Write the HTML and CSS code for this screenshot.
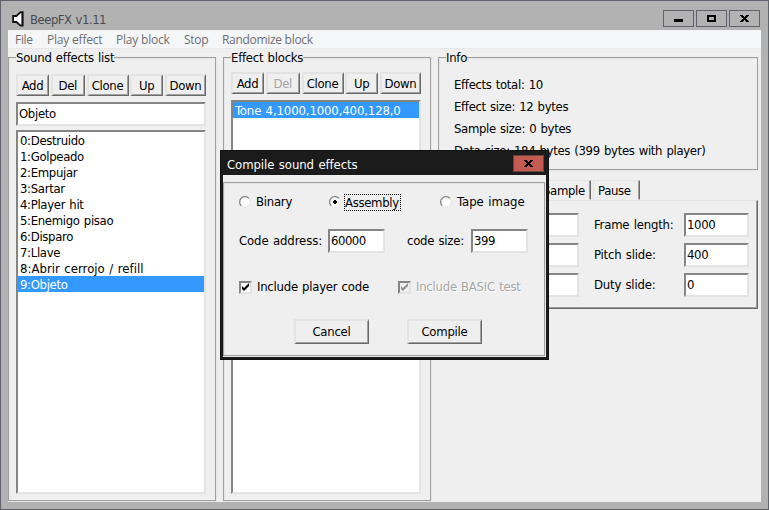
FILE: index.html
```html
<!DOCTYPE html>
<html lang="en">
<head>
<meta charset="utf-8">
<title>BeepFX v1.11</title>
<link rel="stylesheet" href="styles.css">
</head>
<body>
<div class="window">
  <header class="titlebar">
    <svg class="logo" width="13" height="16" viewBox="0 0 13 16"><path d="M1 5H4.5L9 2V14L4.5 11H1Z" fill="#fff"/><path d="M10.3 1.2H8.6L4.4 5H1.1V11H4.4L8.6 14.6H10.3Z" fill="#fff" stroke="#111" stroke-width="1.8"/><path d="M10.9 0.5V15.3" stroke="#111" stroke-width="1.2"/></svg>
    <h1>BeepFX v1.11</h1>
    <div class="controls">
      <button><svg width="9" height="9" viewBox="0 0 9 9"><path d="M0 5H9V8H0Z"/></svg></button>
      <button><svg width="9" height="9" viewBox="0 0 9 9"><path d="M0 1H9V8H0ZM2 3V6H7V3Z" fill-rule="evenodd"/></svg></button>
      <button><svg width="9" height="9" viewBox="0 0 9 9"><path d="M0 1H3V2H4V3H5V2H6V1H9V2H8V3H7V4H6V5H7V6H8V7H9V8H6V7H5V6H4V7H3V8H0V7H1V6H2V5H3V4H2V3H1V2H0Z"/></svg></button>
    </div>
  </header>
  <div class="client">
    <nav class="menu"><span class="m1">File</span><span class="m2">Play effect</span><span class="m3">Play block</span><span class="m4">Stop</span><span class="m5">Randomize block</span></nav>
    <main class="columns">
      <section class="group effects">
        <h2>Sound effects list</h2>
        <div class="buttons"><button class="btn">Add</button><button class="btn">Del</button><button class="btn">Clone</button><button class="btn">Up</button><button class="btn">Down</button></div>
        <div class="field name">Objeto</div>
        <ul class="list">
          <li>0:Destruido</li><li>1:Golpeado</li><li>2:Empujar</li><li>3:Sartar</li><li>4:Player hit</li><li>5:Enemigo pisao</li><li>6:Disparo</li><li>7:Llave</li><li class="loose">8:Abrir cerrojo / refill</li><li class="selected">9:Objeto</li>
        </ul>
      </section>
      <section class="group blocks">
        <h2>Effect blocks</h2>
        <div class="buttons"><button class="btn">Add</button><button class="btn disabled">Del</button><button class="btn">Clone</button><button class="btn">Up</button><button class="btn">Down</button></div>
        <ul class="list"><li class="selected">Tone 4,1000,1000,400,128,0</li></ul>
      </section>
      <div class="side">
        <section class="group info">
          <h2>Info</h2>
          <p>Effects total: 10</p><p>Effect size: 12 bytes</p><p>Sample size: 0 bytes</p><p>Data size: 184 bytes (399 bytes with player)</p>
        </section>
        <div class="tabs"><span class="tab sample">Sample</span><span class="tab pause">Pause</span></div>
        <section class="params">
          <div class="field"></div><label class="l1">Frame length:</label><div class="field">1000</div>
          <div class="field"></div><label class="l2">Pitch slide:</label><div class="field">400</div>
          <div class="field"></div><label class="l3">Duty slide:</label><div class="field">0</div>
        </section>
      </div>
    </main>
  </div>
  <div class="dialog">
    <header class="dialog-title"><h3>Compile sound effects</h3><button class="close"><svg width="9" height="9" viewBox="0 0 9 9"><path d="M0 1H3V2H4V3H5V2H6V1H9V2H8V3H7V4H6V5H7V6H8V7H9V8H6V7H5V6H4V7H3V8H0V7H1V6H2V5H3V4H2V3H1V2H0Z"/></svg></button></header>
    <div class="dialog-body"><div class="group form">
      <div class="row formats">
        <span class="option"><svg width="12" height="12" viewBox="0 0 12 12"><use href="#radio"/></svg><span class="binary">Binary</span></span>
        <span class="option"><svg width="12" height="12" viewBox="0 0 12 12"><use href="#radio"/><path d="M5 4H7V5H8V7H7V8H5V7H4V5H5Z"/></svg><span class="focus">Assembly</span></span>
        <span class="option"><svg width="12" height="12" viewBox="0 0 12 12"><use href="#radio"/></svg><span class="tape">Tape image</span></span>
      </div>
      <div class="row sizes"><label class="address">Code address:</label><div class="field">60000</div><label class="codesize">code size:</label><div class="field">399</div></div>
      <div class="row checks">
        <span class="option"><span class="check"><svg width="9" height="9" viewBox="0 0 9 9"><path d="M1 3V6L3 8L8 3V0L3 5Z"/></svg></span><span class="incplayer">Include player code</span></span>
        <span class="option off"><span class="check"><svg width="9" height="9" viewBox="0 0 9 9"><path d="M1 3V6L3 8L8 3V0L3 5Z"/></svg></span><span class="incbasic">Include BASIC test</span></span>
      </div>
      <div class="row actions"><button class="btn cancel">Cancel</button><button class="btn compile">Compile</button></div>
    </div></div>
  </div>
</div>
<svg width="0" height="0" class="defs"><defs><g id="radio"><circle cx="6" cy="6" r="5.3" fill="#fff" stroke="#e3e3e3"/><path d="M2.2 9.8A5.3 5.3 0 0 1 9.8 2.2" fill="none" stroke="#888" stroke-width="1.3"/></g></defs></svg>
</body>
</html>
```
FILE: styles.css
```css
* { box-sizing: border-box; }
body { margin: 0; font: 13px/16px "DejaVu Sans Condensed", "DejaVu Sans", sans-serif; font-stretch: condensed; letter-spacing: -0.33px; word-spacing: 0.8px; color: #000; }
h1, h2, h3, p, ul { margin: 0; padding: 0; font-size: inherit; font-weight: normal; }
button { font: inherit; letter-spacing: inherit; color: inherit; padding: 0; margin: 0; }
span, label, h1, h2, h3, li, p { white-space: nowrap; }
svg { display: block; flex: none; }
.defs { position: absolute; }
.window { position: relative; width: 769px; height: 510px; border: 1px solid #62626c; background: #b2b2b2; padding: 0 7px; overflow: hidden; }
.titlebar { height: 29px; display: flex; align-items: flex-start; padding: 9px 1px 0 4px; }
.logo { margin-top: 1px; }
h1 { color: #484b52; margin: 2px 0 0 5px; letter-spacing: -0.5px; }
.controls { margin-left: auto; display: flex; gap: 2px; }
.controls button { width: 31px; height: 17px; border: 1px solid #62626c; background: #b2b2b2; display: flex; align-items: center; justify-content: center; }
.client { height: 472px; width: 753px; background: #efefef; }
.menu { height: 19px; background: #f4f6f8; border-bottom: 1px solid #e8e8e9; display: flex; padding-left: 7px; color: #6e6e70; font: 12px/20px "Open Sans", sans-serif; letter-spacing: -0.3px; word-spacing: 0; }
.m1 { width: 32px; } .m2 { width: 69px; } .m3 { width: 68px; } .m4 { width: 38px; }
.m2, .m3 { letter-spacing: -0.2px; }
.columns { display: grid; grid-template-columns: 208px 208px 320px; gap: 7px; padding-top: 8px; height: 453px; }
.group { border: 1px solid #a0a0a0; box-shadow: inset 1px 1px #e6e6e6, 1px 1px #e6e6e6; display: flex; flex-direction: column; align-items: flex-start; }
.group h2 { height: 16px; margin: -8px 0 0 7px; background: #efefef; letter-spacing: -0.25px; }
.effects, .blocks { height: 444px; }
.buttons { display: grid; grid-template-columns: 33px 34px 42px 33px 41px; column-gap: 1.75px; height: 22px; width: 190px; margin: 8px 0 0 7px; }
.blocks .buttons { margin-top: 6px; }
.btn { background: #efefef; border: 2px solid; border-color: #e3e3e3 #696969 #696969 #e3e3e3; box-shadow: inset -1px -1px #a0a0a0; border-width: 2px 1px 1px 2px; text-align: center; padding-right: 1px; }
.disabled { color: #a6a6a6; }
.field, .list { background: #fff; border: 2px solid; border-color: #858585 #e3e3e3 #e3e3e3 #858585; }
.field { height: 24px; line-height: 20px; padding-left: 1px; }
.name { width: 190px; margin: 6px 0 0 7px; line-height: 19px; }
.list { list-style: none; width: 190px; margin: 4px 0 0 7px; height: 364px; }
.blocks .list { margin-top: 6px; height: 394px; letter-spacing: -0.12px; }
.list li { height: 16px; padding-left: 2px; line-height: 17px; }
.list .loose { letter-spacing: 0.02px; }
.list .selected { background: #3399ff; color: #fff; }
.info { height: 113px; }
.info h2 { margin-bottom: 10px; }
.info p { height: 22px; line-height: 18px; margin-left: 15px; }
.tabs { height: 20px; margin-top: 10px; display: flex; padding-left: 99px; gap: 2px; }
.tab { height: 20px; line-height: 20px; border: 1px solid; border-color: #e3e3e3 #696969 transparent #e3e3e3; box-shadow: inset -1px 0 #a0a0a0; }
.sample { width: 54px; padding-left: 5px; }
.pause { width: 47px; padding-left: 4px; }
.params { height: 109px; border: 1px solid; border-color: #e3e3e3 #696969 #696969 #e3e3e3; box-shadow: inset -1px -1px #a0a0a0; display: grid; grid-template-columns: 65px 105px 65px; grid-template-rows: 24px 24px 24px; row-gap: 6px; justify-content: end; padding: 12px 8px 0 0; }
.params label { padding-left: 15px; line-height: 23px; letter-spacing: -0.2px; }
.dialog { position: absolute; left: 219px; top: 149px; width: 329px; height: 210px; background: #1b1b1b; border: 1px solid #111; padding: 0 2px 2px; }
.dialog-title { height: 24px; display: flex; align-items: flex-start; padding: 4px 2px 0 4px; color: #fff; }
.dialog-title h3 { padding-top: 2px; letter-spacing: -0.07px; }
.close { margin-left: auto; width: 31px; height: 17px; border: 1px solid #6b4441; background: #c35b51; display: flex; align-items: center; justify-content: center; }
.dialog-body { background: #efefef; height: 182px; padding-top: 7px; }
.form { width: 322px; height: 174px; letter-spacing: -0.25px; }
.row { display: flex; align-items: center; }
.option { display: flex; align-items: center; }
.formats { height: 18px; margin: 10px 0 0 15px; }
.formats .option:nth-child(1) { width: 90px; } .formats .option:nth-child(2) { width: 111px; }
.binary, .tape { margin-left: 5px; }
.tape { letter-spacing: 0; }
.focus { margin-left: 3px; height: 17px; width: 57px; outline: 1px dotted #000; outline-offset: -1px; padding-left: 1px; line-height: 17px; letter-spacing: -0.33px; }
.sizes { height: 24px; margin: 18px 0 0 15px; }
.sizes .field { width: 57px; letter-spacing: -0.5px; }
.address { width: 89px; letter-spacing: -0.1px; } .codesize { width: 64px; margin-left: 22px; }
.checks { height: 18px; margin: 25px 0 0 15px; }
.checks .option:first-child { width: 159px; }
.check { width: 13px; height: 13px; background: #fff; border: 2px solid; border-color: #858585 #e3e3e3 #e3e3e3 #858585; margin-right: 5px; }
.off { color: #a6a6a6; text-shadow: 1px 1px #fff; }
.off .check { background: #efefef; } .off svg { fill: #909090; }
.actions { margin: 23px 0 0 70px; gap: 38px; }
.actions .btn { width: 75px; height: 25px; }
```
